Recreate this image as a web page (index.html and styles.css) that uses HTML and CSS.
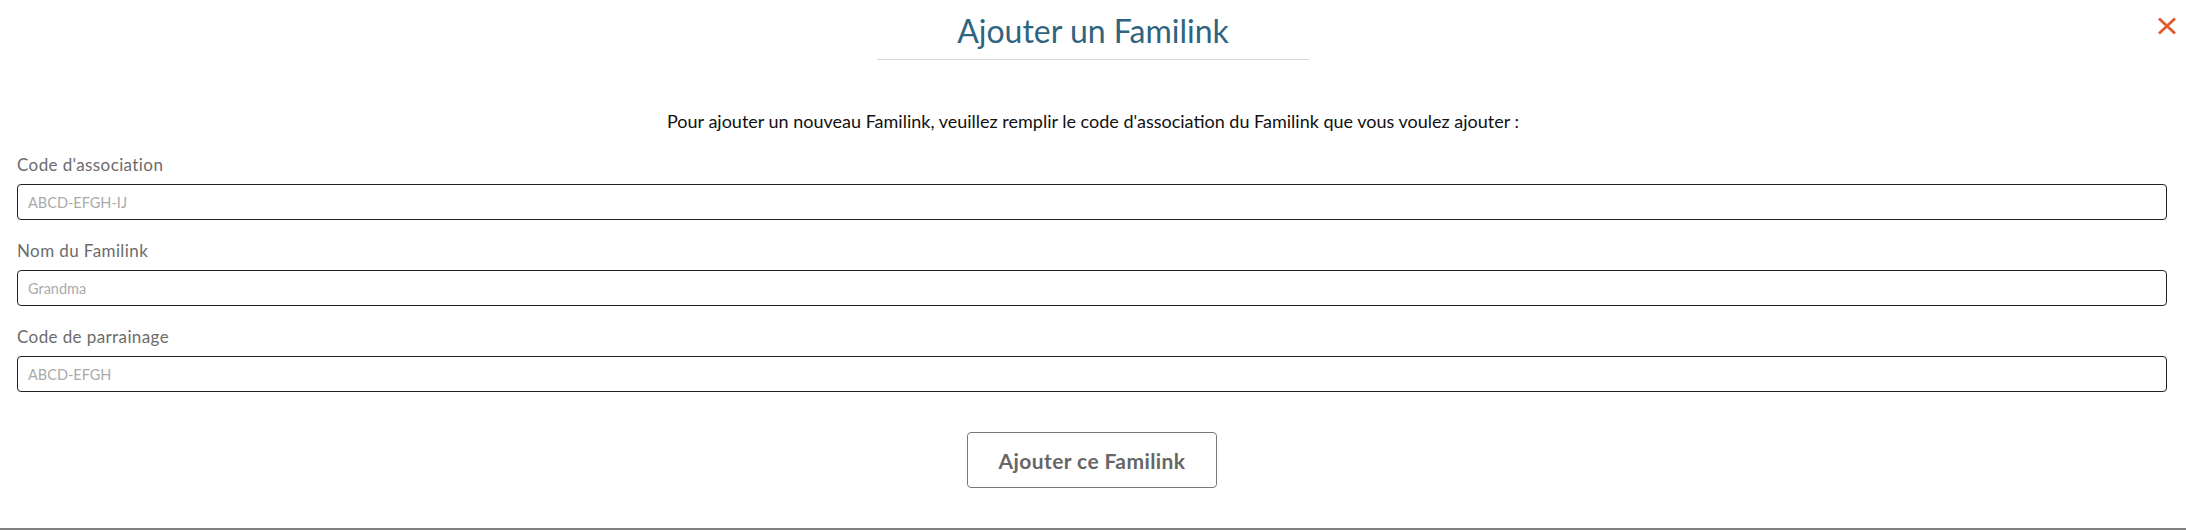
FILE: index.html
```html
<!DOCTYPE html>
<html lang="fr">
<head>
<meta charset="utf-8">
<title>Ajouter un Familink</title>
<link rel="stylesheet" href="styles.css">
</head>
<body>
<div class="modal">
  <header class="modal-header">
    <h1 class="modal-title">Ajouter un Familink</h1>
    <div class="divider"></div>
    <button class="close" aria-label="Fermer">
      <svg width="20" height="18" viewBox="0 0 20 18"><path d="M2 1.5 L18 16.5 M18 1.5 L2 16.5" stroke="#e35b2c" stroke-width="2.8" stroke-linecap="butt" fill="none"/></svg>
    </button>
  </header>
  <p class="intro">Pour ajouter un nouveau Familink, veuillez remplir le code d'association du Familink que vous voulez ajouter :</p>
  <form class="form">
    <div class="field">
      <label class="label" for="code">Code d'association</label>
      <input class="input" id="code" type="text" placeholder="ABCD-EFGH-IJ">
    </div>
    <div class="field">
      <label class="label" for="nom">Nom du Familink</label>
      <input class="input" id="nom" type="text" placeholder="Grandma">
    </div>
    <div class="field">
      <label class="label" for="parrain">Code de parrainage</label>
      <input class="input" id="parrain" type="text" placeholder="ABCD-EFGH">
    </div>
    <div class="actions">
      <button class="submit" type="button">Ajouter ce Familink</button>
    </div>
  </form>
</div>
</body>
</html>
```

FILE: styles.css
```css
* { box-sizing: border-box; }
html, body { margin: 0; padding: 0; background: #fff; }
body { font-family: Lato, "Noto Sans", sans-serif; }

.modal {
  position: relative;
  height: 530px;
  border-bottom: 2px solid #808080;
  display: flex;
  flex-direction: column;
}

.modal-header {
  display: flex;
  flex-direction: column;
  align-items: center;
  padding-top: 12px;
}

.modal-title {
  margin: 0;
  font-size: 32px;
  line-height: 38px;
  font-weight: 400;
  color: #2f6480;
}

.divider {
  margin-top: 9px;
  width: 432px;
  height: 1px;
  background: #cfd8de;
}

.close {
  position: absolute;
  top: 17px;
  right: 9px;
  width: 20px;
  height: 18px;
  padding: 0;
  border: 0;
  background: none;
  cursor: pointer;
  display: flex;
}

.intro {
  margin: 51px 0 0;
  text-align: center;
  font-size: 18px;
  line-height: 20px;
  color: #111;
}

.form {
  display: flex;
  flex-direction: column;
  gap: 22px;
  padding: 25px 19px 0 17px;
}

.field {
  display: flex;
  flex-direction: column;
  gap: 10px;
}

.label {
  font-size: 17px;
  line-height: 18px;
  letter-spacing: 0.4px;
  color: #6b6b6b;
}

.input {
  height: 36px;
  width: 100%;
  border: 1px solid #222;
  border-radius: 4px;
  padding: 0 10px;
  font-family: inherit;
  font-size: 14.5px;
  color: #333;
  background: #fff;
}
.input::placeholder { color: #aaa; }

.actions {
  display: flex;
  justify-content: center;
  margin-top: 18px;
}

.submit {
  width: 250px;
  height: 56px;
  border: 1px solid #777;
  border-radius: 4px;
  background: #fff;
  font-family: inherit;
  font-weight: 700;
  font-size: 21px;
  letter-spacing: 0.4px;
  color: #666;
  cursor: pointer;
}
```
